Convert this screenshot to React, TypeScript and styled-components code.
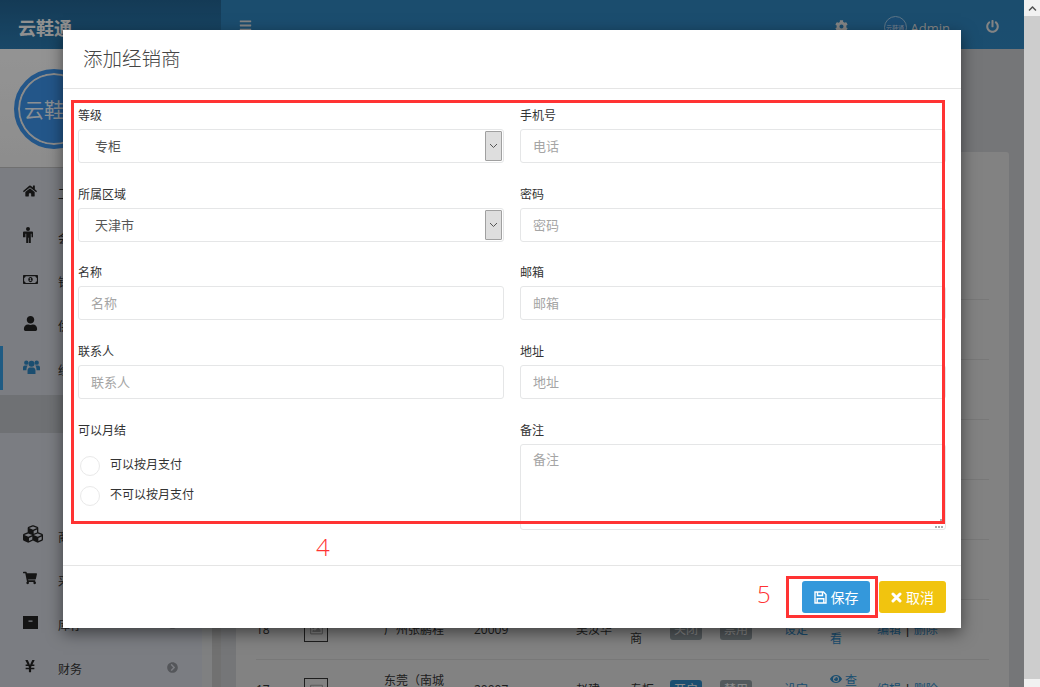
import React from "react";
import styled, { createGlobalStyle } from "styled-components";
import {
  FaHome, FaRegMoneyBillAlt, FaUser, FaCubes, FaShoppingCart,
  FaYenSign, FaChevronCircleRight, FaCog, FaPowerOff, FaBars, FaEye, FaChevronUp, FaRegImage,
} from "react-icons/fa";

const Global = createGlobalStyle`
  html, body { margin: 0; padding: 0; height: 100%; overflow: hidden; }
  body { font-family: "Open Sans", "Noto Sans CJK SC", sans-serif; font-size: 13px; color: #333; }
  * { box-sizing: border-box; }
`;

const Viewport = styled.div`
  display: flex; width: 1040px; height: 687px; overflow: hidden;
`;
const Page = styled.div`
  position: relative; width: 1024px; height: 687px; overflow: hidden; background: #c6c7c9;
`;
const Scrollbar = styled.div`
  width: 16px; height: 687px; display: flex; flex-direction: column; background: #f1f1f1;
`;
const ScrollUp = styled.div`
  height: 16px; display: flex; align-items: center; justify-content: center; color: #505050; font-size: 9px; background: #f1f1f1;
`;
const ScrollThumb = styled.div`
  height: 663px; background: #cdcdcd;
`;

const Header = styled.header`
  display: flex; height: 49px; background: #2d82bb; color: #fff;
`;
const Brand = styled.div`
  width: 221px; padding: 14px 18px 0; font-size: 18px; font-weight: 700; color: #f0f0f0;
  background: linear-gradient(#22628f, #2a78ad);
`;
const HeaderBar = styled.div`
  flex: 1; display: flex; align-items: flex-start; padding: 19px 25px 0 18px; color: #ddd;
  background: linear-gradient(#2d80b7, #2d82bb);
`;
const Burger = styled.div`
  font-size: 13px; margin-right: auto; line-height: 1;
`;
const HeaderIcon = styled.div<{ $gap?: number }>`
  font-size: 13px; line-height: 1; margin-right: ${p => p.$gap ?? 0}px; margin-top: 1px;
`;
const HeaderAvatar = styled.div`
  width: 23px; height: 23px; margin-top: -3px; margin-right: 4px; border-radius: 50%; border: 1px solid #9cc4df;
  font-size: 6px; display: flex; align-items: center; justify-content: center; white-space: nowrap; color: #cde;
  background: #2e7fc0;
`;
const HeaderName = styled.div`
  font-size: 13px; line-height: 18px; margin-right: 36px; color: #ddd;
`;

const Body = styled.div`
  display: flex; height: 638px;
`;
const Sidebar = styled.aside`
  width: 202px; background: #cdd0d9; flex: none;
`;
const Profile = styled.div`
  height: 119px; padding: 20px 14px; background: linear-gradient(#f6f6f6, #ebebeb); border-bottom: 1px solid #bbb;
`;
const Avatar = styled.div`
  width: 80px; height: 80px; border-radius: 50%; background: #3b90e4; border: 4px solid #3b90e4;
  box-shadow: inset 0 0 0 2px #e8e8e8; display: flex; align-items: center; justify-content: center;
  font-size: 20px; color: #e8eef5; white-space: nowrap;
`;
const Menu = styled.nav`
  padding-top: 2px; display: flex; flex-direction: column;
`;
const MenuItem = styled.div<{ $active?: boolean }>`
  height: 44px; display: flex; align-items: center; padding-left: ${p => (p.$active ? 20 : 23)}px; flex: none;
  border-left: ${p => (p.$active ? "3px solid #3498db" : "none")};
  color: ${p => (p.$active ? "#2d82bb" : "#222")};
`;
const MenuIcon = styled.span<{ $size: number }>`
  width: 35px; display: flex; align-items: center; font-size: ${p => p.$size}px; flex: none;
  position: relative; top: -1px;
`;
const MenuLabel = styled.span`
  flex: 1; color: #333; font-size: 12px; position: relative; top: 2px;
`;
const MenuArrow = styled.span`
  display: flex; font-size: 11px; color: #8d9096; margin-right: 24px;
`;
const SubBand = styled.div`
  height: 38px; margin: 5px 0 80px; background: #babcc2; flex: none;
`;

const Gutter = styled.div`
  width: 19px; flex: none; display: flex; background: #d4d5d7;
`;
const GutterStripe = styled.div`
  width: 9px; margin-left: 10px; background: #bdbdbd;
`;
const Content = styled.main`
  flex: 1; padding: 103px 15px 0 15px; background: #c4c5c8;
`;
const Card = styled.div`
  height: 600px; background: #d9d9d9; border-radius: 3px; padding: 0 20px;
`;
const TableHead = styled.div`
  height: 148px; border-bottom: 1px solid #c8c8c8;
`;
const Row = styled.div`
  display: grid; grid-template-columns: 48px 80px 90px 102px 54px 40px 50px 64px 46px 47px 70px;
  align-items: center; height: 60px; border-bottom: 1px solid #c8c8c8; font-size: 12px; line-height: 18px; color: #333;
`;
const Cell = styled.span<{ $w?: number }>`
  max-width: ${p => (p.$w ? `${p.$w}px` : "none")};
`;
const Thumb = styled.div`
  width: 24px; height: 24px; border: 1px solid #333; display: flex; align-items: center; justify-content: center; font-size: 13px; color: #999;
`;
const Badge = styled.span<{ $on?: boolean }>`
  display: inline-block; width: 32px; height: 20px; border-radius: 3px; text-align: center; line-height: 20px; font-size: 12px;
  background: ${p => (p.$on ? "#2d82bb" : "#8a9599")}; color: #e6e6e6;
`;
const Link = styled.span<{ $w?: number }>`
  color: #2d82bb; font-size: 12px; max-width: ${p => (p.$w ? `${p.$w}px` : "none")};
`;
const Divider = styled.b`
  color: #333; font-weight: 600;
`;

const Backdrop = styled.div`
  position: absolute; inset: 0; background: rgba(0, 0, 0, 0.4);
`;
const Modal = styled.div`
  position: absolute; left: 63px; top: 30px; width: 898px; height: 598px; background: #fff;
  box-shadow: 0 5px 15px rgba(0, 0, 0, 0.5); display: flex; flex-direction: column;
`;
const ModalHead = styled.div`
  height: 59px; padding: 15px 20px 0; border-bottom: 1px solid #e5e5e5; flex: none;
`;
const Title = styled.h4`
  margin: 0; font-size: 19.5px; font-weight: 300; line-height: 28px; color: #444;
`;
const Form = styled.form`
  flex: 1; padding: 15.75px 15px 0; display: grid; grid-template-columns: 426px 426px; column-gap: 16px;
  grid-auto-rows: 58px; row-gap: 20.75px;
`;
const Field = styled.div`
  display: flex; flex-direction: column; min-width: 0;
`;
const Label = styled.label`
  font-size: 12px; line-height: 22px; height: 24px; flex: none; color: #333;
`;
const SelectBox = styled.div`
  display: flex; height: 34px; flex: none; border: 1px solid #e5e6e7; border-radius: 3px; padding: 1px; background: #fff;
`;
const Select = styled.select`
  flex: 1; border: 0; outline: 0; background: #fff; appearance: none; padding: 0 15px; font: inherit; font-size: 13px; color: #555;
`;
const SelectArrow = styled.span`
  width: 17px; flex: none; background: #dedede; border: 1px solid #a0a0a0; border-radius: 1px; display: flex; align-items: center; justify-content: center; color: #555;
`;
const Input = styled.input`
  height: 34px; flex: none; border: 1px solid #e5e6e7; border-radius: 3px; padding: 0 12px; font: inherit; font-size: 13px; outline: 0; width: 100%;
  &::placeholder { color: #a5a5a5; opacity: 1; }
`;
const AreaWrap = styled.div`
  position: relative; height: 86px; flex: none;
`;
const TextArea = styled.textarea`
  display: block; width: 100%; height: 86px; border: 1px solid #e5e6e7; border-radius: 3px; padding: 4px 12px; font: inherit; font-size: 13px; line-height: 20px; resize: none; outline: 0;
  &::placeholder { color: #a5a5a5; opacity: 1; }
`;
const Grip = styled.span`
  position: absolute; right: 3px; bottom: 2px; width: 8px; height: 2px;
  background: repeating-linear-gradient(90deg, #aaa 0 2px, transparent 2px 3px);
`;
const GripDot = styled.span`
  position: absolute; right: 4px; bottom: 9px; width: 2px; height: 2px; background: #aaa;
`;
const RadioRow = styled.div<{ $first?: boolean }>`
  display: flex; align-items: center; height: 20px; flex: none; margin-top: ${p => (p.$first ? 12 : 10)}px; padding-left: 2px; font-size: 12px; color: #333;
`;
const RadioDot = styled.span`
  width: 20px; height: 20px; border: 1px solid #e9e9e9; border-radius: 50%; margin-right: 10px; flex: none;
`;
const RadioText = styled.span`
  position: relative; top: -2px;
`;
const Footer = styled.div`
  height: 63px; border-top: 1px solid #e5e5e5; padding: 15px; display: flex; justify-content: flex-end; gap: 9px; flex: none;
`;
const Button = styled.button<{ $kind: "save" | "cancel" }>`
  width: ${p => (p.$kind === "save" ? 68 : 67)}px; height: 32px; border: 0; border-radius: 3px; color: #fff; font: inherit; font-size: 14px;
  display: flex; align-items: center; justify-content: center; gap: 4px; padding: 0;
  background: ${p => (p.$kind === "save" ? "#3498db" : "#f1c40f")};
`;
const RedBox = styled.div<{ $x: number; $y: number; $w: number; $h: number }>`
  position: absolute; left: ${p => p.$x}px; top: ${p => p.$y}px; width: ${p => p.$w}px; height: ${p => p.$h}px;
  border: 3px solid #ff3333; pointer-events: none;
`;
const RedNum = styled.span<{ $x: number; $y: number }>`
  position: absolute; left: ${p => p.$x}px; top: ${p => p.$y}px; color: #ff3333; font-size: 24px; line-height: 30px; font-weight: 300;
`;

const MaleIcon = () => (
  <svg width="10" height="16" viewBox="0 0 10 16" fill="currentColor">
    <circle cx="5" cy="2" r="2" />
    <path d="M1 4.6h8q1 0 1 1v4.7H8.5V6.8h-.7V16h-2v-5.2h-.6V16h-2V6.8h-.7v3.5H0V5.6q0-1 1-1z" />
  </svg>
);
const UsersIcon = () => (
  <svg width="17" height="16" viewBox="0 0 18 16" fill="currentColor">
    <circle cx="9" cy="4.6" r="3.2" />
    <path d="M4.8 15.5V12c0-2.5 1.5-3.6 2.5-3.6h3.4c1 0 2.5 1.1 2.5 3.6v3.5z" />
    <circle cx="3.5" cy="3.4" r="2.3" />
    <circle cx="14.5" cy="3.4" r="2.3" />
    <path d="M0 11.5V8.8c0-1.5 1-2.4 2-2.4h3C4.2 7.3 3.7 9 3.6 11.5z" />
    <path d="M18 11.5V8.8c0-1.5-1-2.4-2-2.4h-3c.8.9 1.3 2.6 1.4 5.1z" />
  </svg>
);
const ArchiveIcon = () => (
  <svg width="15" height="13" viewBox="0 0 15 13" fill="currentColor" fillRule="evenodd">
    <path d="M0 0h15v13H0zM5.5 4.5v1.2h4V4.5z" />
  </svg>
);
const SaveIcon = () => (
  <svg width="13" height="13" viewBox="0 0 13 13" fill="none" stroke="currentColor" strokeWidth="1.4">
    <path d="M1 1h8.5L12 3.5V12H1z" />
    <path d="M3.5 1v3.5h5V1" />
    <path d="M3.2 12V7.8h6.6V12" />
  </svg>
);
const CrossIcon = () => (
  <svg width="11" height="11" viewBox="0 0 11 11" stroke="currentColor" strokeWidth="3" strokeLinecap="round">
    <path d="M2 2l7 7M9 2l-7 7" />
  </svg>
);
const Chevron = () => (
  <svg width="9" height="6" viewBox="0 0 9 6" fill="none" stroke="currentColor" strokeWidth="1">
    <path d="M1 1l3.5 3.5L8 1" />
  </svg>
);

const menuTop = [
  { i: <FaHome />, s: 14, t: "工作台" },
  { i: <MaleIcon />, s: 16, t: "会员" },
  { i: <FaRegMoneyBillAlt />, s: 15, t: "销售" },
  { i: <FaUser />, s: 15, t: "供应商" },
];
const menuBottom = [
  { i: <FaCubes />, s: 20, t: "商品" },
  { i: <FaShoppingCart />, s: 14, t: "采购" },
  { i: <ArchiveIcon />, s: 14, t: "库存" },
  { i: <FaYenSign />, s: 14, t: "财务" },
];

export default function App() {
  return (
    <Viewport>
      <Global />
      <Page>
        <Header>
          <Brand>云鞋通</Brand>
          <HeaderBar>
            <Burger><FaBars /></Burger>
            <HeaderIcon $gap={36}><FaCog /></HeaderIcon>
            <HeaderAvatar>云鞋通</HeaderAvatar>
            <HeaderName>Admin</HeaderName>
            <HeaderIcon><FaPowerOff /></HeaderIcon>
          </HeaderBar>
        </Header>
        <Body>
          <Sidebar>
            <Profile><Avatar>云鞋通</Avatar></Profile>
            <Menu>
              {menuTop.map(m => (
                <MenuItem key={m.t}><MenuIcon $size={m.s}>{m.i}</MenuIcon><MenuLabel>{m.t}</MenuLabel></MenuItem>
              ))}
              <MenuItem $active><MenuIcon $size={16}><UsersIcon /></MenuIcon><MenuLabel>经销商</MenuLabel></MenuItem>
              <SubBand />
              {menuBottom.map(m => (
                <MenuItem key={m.t}>
                  <MenuIcon $size={m.s}>{m.i}</MenuIcon><MenuLabel>{m.t}</MenuLabel>
                  <MenuArrow><FaChevronCircleRight /></MenuArrow>
                </MenuItem>
              ))}
            </Menu>
          </Sidebar>
          <Gutter><GutterStripe /></Gutter>
          <Content>
            <Card>
              <TableHead />
              {[22, 21, 20, 19, 0].map(n => <Row key={n} />)}
              <Row>
                <span>18</span><Thumb><FaRegImage /></Thumb><Cell $w={62}>广州张鹏程</Cell><span>20009</span><span>吴汝华</span>
                <Cell $w={30}>经销商</Cell><span><Badge>关闭</Badge></span><span><Badge>禁用</Badge></span>
                <Link>设定</Link><Link $w={30}><FaEye /> 查看</Link><Link>编辑 <Divider>|</Divider> 删除</Link>
              </Row>
              <Row>
                <span>17</span><Thumb><FaRegImage /></Thumb><Cell $w={62}>东莞（南城店）</Cell><span>20007</span><span>赵建</span>
                <Cell $w={30}>专柜</Cell><span><Badge $on>开启</Badge></span><span><Badge>禁用</Badge></span>
                <Link>设定</Link><Link $w={30}><FaEye /> 查看</Link><Link>编辑 <Divider>|</Divider> 删除</Link>
              </Row>
            </Card>
          </Content>
        </Body>
        <Backdrop />
        <Modal>
          <ModalHead><Title>添加经销商</Title></ModalHead>
          <Form>
            <Field>
              <Label>等级</Label>
              <SelectBox>
                <Select defaultValue="专柜"><option>专柜</option></Select>
                <SelectArrow><Chevron /></SelectArrow>
              </SelectBox>
            </Field>
            <Field><Label>手机号</Label><Input placeholder="电话" /></Field>
            <Field>
              <Label>所属区域</Label>
              <SelectBox>
                <Select defaultValue="天津市"><option>天津市</option></Select>
                <SelectArrow><Chevron /></SelectArrow>
              </SelectBox>
            </Field>
            <Field><Label>密码</Label><Input placeholder="密码" /></Field>
            <Field><Label>名称</Label><Input placeholder="名称" /></Field>
            <Field><Label>邮箱</Label><Input placeholder="邮箱" /></Field>
            <Field><Label>联系人</Label><Input placeholder="联系人" /></Field>
            <Field><Label>地址</Label><Input placeholder="地址" /></Field>
            <Field>
              <Label>可以月结</Label>
              <RadioRow $first><RadioDot /><RadioText>可以按月支付</RadioText></RadioRow>
              <RadioRow><RadioDot /><RadioText>不可以按月支付</RadioText></RadioRow>
            </Field>
            <Field>
              <Label>备注</Label>
              <AreaWrap>
                <TextArea placeholder="备注" />
                <GripDot />
                <Grip />
              </AreaWrap>
            </Field>
          </Form>
          <Footer>
            <Button $kind="save" type="button"><SaveIcon />保存</Button>
            <Button $kind="cancel" type="button"><CrossIcon />取消</Button>
          </Footer>
          <RedBox $x={8} $y={70} $w={874} $h={424} />
          <RedBox $x={723} $y={546} $w={92} $h={42} />
          <RedNum $x={253} $y={502}>4</RedNum>
          <RedNum $x={694} $y={549}>5</RedNum>
        </Modal>
      </Page>
      <Scrollbar>
        <ScrollUp><FaChevronUp /></ScrollUp>
        <ScrollThumb />
      </Scrollbar>
    </Viewport>
  );
}
